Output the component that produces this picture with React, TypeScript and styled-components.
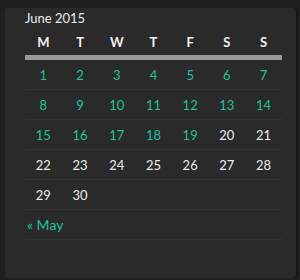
import React from 'react';
import styled, { createGlobalStyle } from 'styled-components';

const GlobalStyle = createGlobalStyle`
  html, body {
    margin: 0;
    background: #1f1f1f;
  }
  body {
    font-family: Lato, 'Open Sans', sans-serif;
  }
`

const Widget = styled.div`
  box-sizing: border-box;
  margin: 8px 0 0 5px;
  width: 291px;
  height: 270px;
  padding: 0 14px 0 20px;
  background: #2a2a2a;
  border-radius: 3px;
  box-shadow: 1px 1px 2px rgba(0, 0, 0, 0.5);
`

const Calendar = styled.table`
  width: 100%;
  border-collapse: collapse;
  border-spacing: 0;
  table-layout: fixed;
`

const Caption = styled.caption`
  height: 20px;
  padding-top: 2px;
  box-sizing: border-box;
  text-align: left;
  font-size: 13px;
  line-height: 16px;
  color: #ececec;
`

const HeadRow = styled.tr`
  border-bottom: 5px solid #999;
`

const DayName = styled.th`
  height: 27px;
  padding: 0;
  font-size: 13px;
  font-weight: 700;
  color: #f2f2f2;
  text-align: center;
`

const WeekRow = styled.tr`
  border-bottom: 1px solid #333;
`

const Day = styled.td<{ $linked?: boolean }>`
  height: 29px;
  padding: 0;
  text-align: center;
  font-size: 13px;
  color: ${({ $linked }) => ($linked ? '#1ec39e' : '#ececec')};
`

const NavCell = styled.td`
  height: 28px;
  padding: 0 0 0 2px;
  font-size: 14px;
  color: #1ec39e;
`

const dayNames = ['M', 'T', 'W', 'T', 'F', 'S', 'S'];

// days with posts are shown as links
const lastLinked = 19;

function buildWeeks(): (number | null)[][] {
  const weeks: (number | null)[][] = [];
  let week: (number | null)[] = [];
  for (let d = 1; d <= 30; d++) {
    week.push(d);
    if (week.length === 7) {
      weeks.push(week);
      week = [];
    }
  }
  while (week.length < 7) week.push(null);
  weeks.push(week);
  return weeks;
}

export default function App() {
  const weeks = buildWeeks();

  return (
    <>
      <GlobalStyle />
      <Widget>
        <Calendar>
          <Caption>June 2015</Caption>
          <thead>
            <HeadRow>
              {dayNames.map((n, i) => (
                <DayName key={i}>{n}</DayName>
              ))}
            </HeadRow>
          </thead>
          <tbody>
            {weeks.map((week, wi) => (
              <WeekRow key={wi}>
                {week.map((d, di) => (
                  <Day key={di} $linked={d !== null && d <= lastLinked}>
                    {d ?? ''}
                  </Day>
                ))}
              </WeekRow>
            ))}
          </tbody>
          <tfoot>
            <WeekRow>
              <NavCell colSpan={3}>« May</NavCell>
              <Day colSpan={4} />
            </WeekRow>
          </tfoot>
        </Calendar>
      </Widget>
    </>
  );
}
